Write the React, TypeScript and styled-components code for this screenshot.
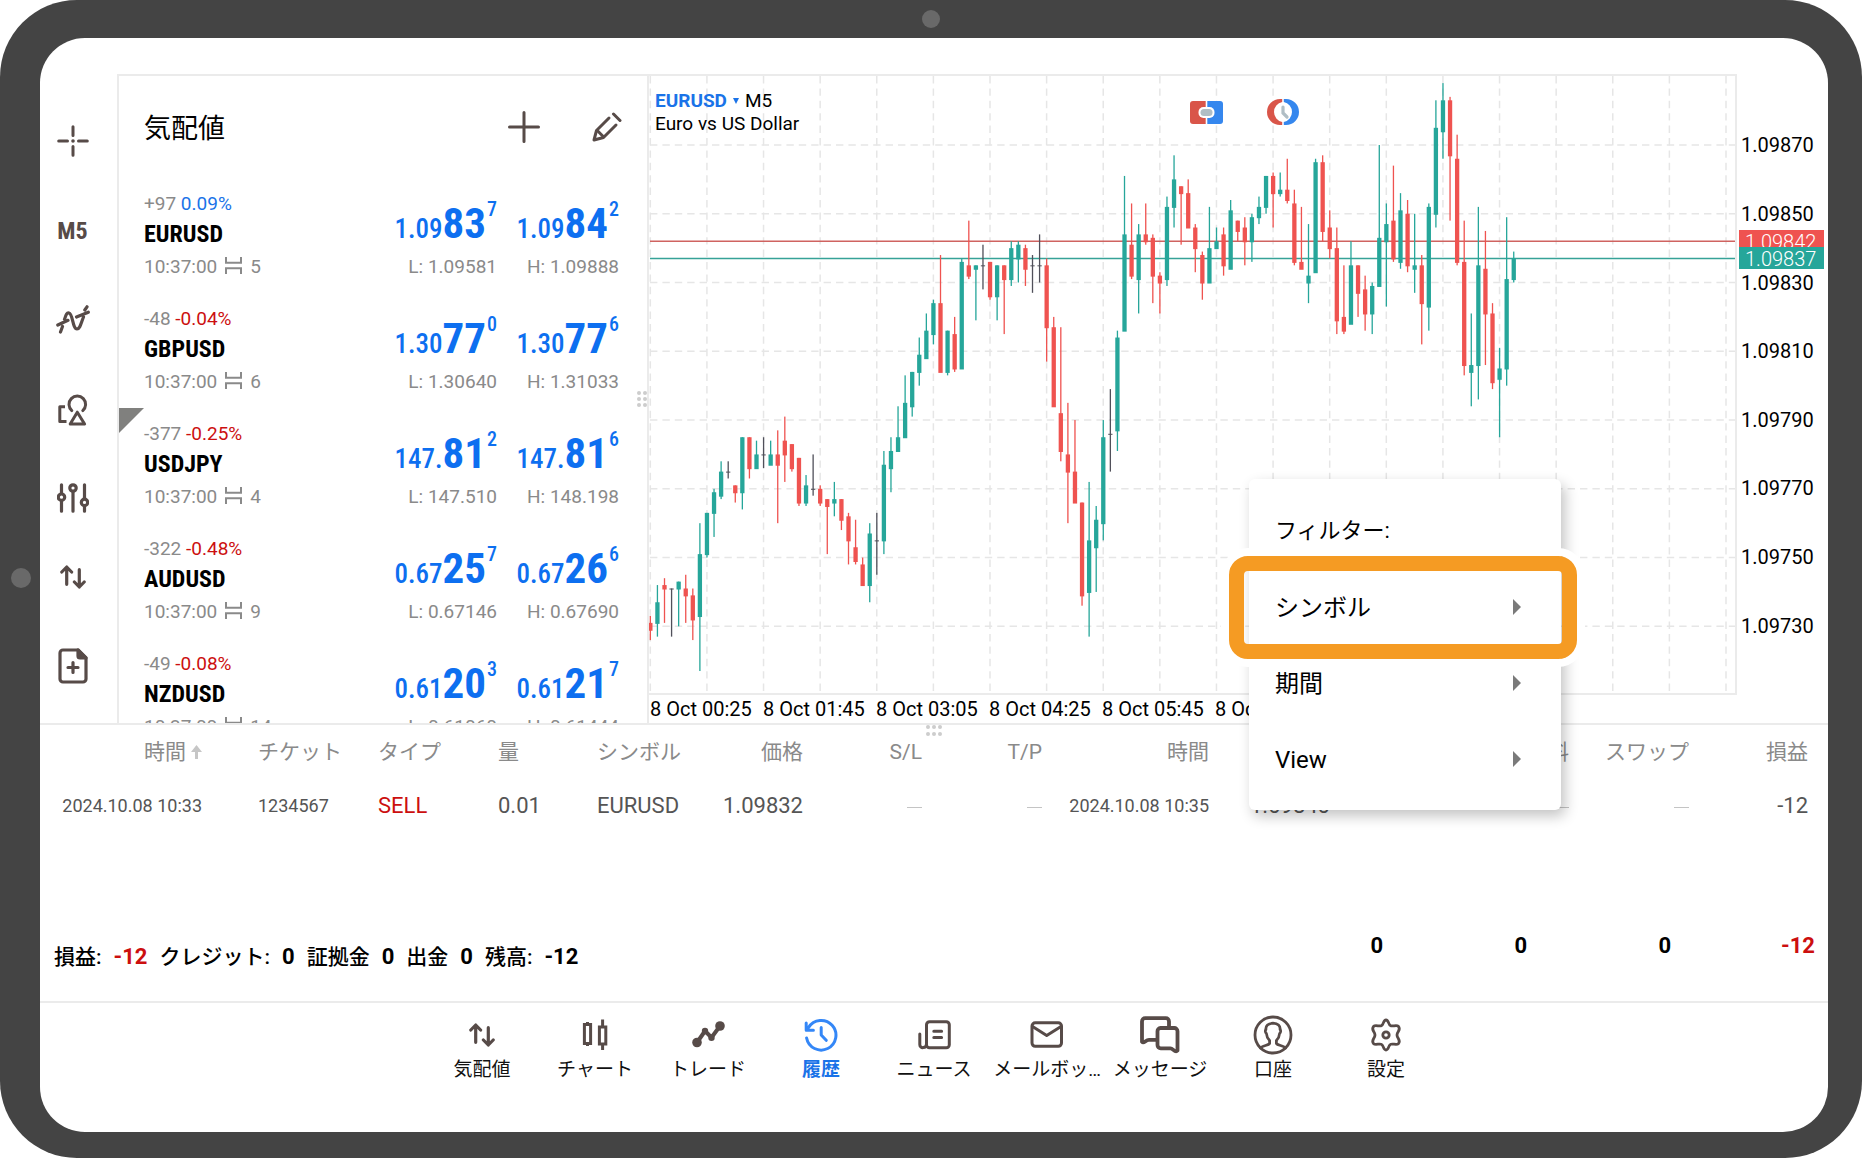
import React from "react";
import styled, { createGlobalStyle, css } from "styled-components";

const ink = "#574b48";
const blue = "#0d6ff0";
const red = "#cc0f0f";
const line = "#ebebeb";
const sans = `Roboto, "Noto Sans CJK JP", sans-serif`;
const narrow = `"Roboto Condensed", "Liberation Sans Narrow", Roboto, "Noto Sans CJK JP", sans-serif`;

const GlobalStyle = createGlobalStyle`
  *, *::before, *::after { box-sizing: border-box; }
  body { margin: 0; background: #fff; color: #000; font-family: ${sans}; }
  button { margin: 0; padding: 0; border: 0; background: none; color: inherit; font: inherit; cursor: pointer; }
`;

/* ---------- device ---------- */

const Device = styled.div`
  position: relative;
  display: flex;
  height: 100vh;
  min-height: 900px;
  padding: 38px 34px 26px 40px;
  border-radius: 77px;
  background: #444;
`;

const TopCamera = styled.span`
  position: absolute;
  top: 10px;
  left: 50%;
  width: 18px;
  height: 18px;
  margin-left: -9px;
  border-radius: 50%;
  background: #696969;
`;

const SideCamera = styled.span`
  position: absolute;
  top: 50%;
  left: 11px;
  width: 20px;
  height: 20px;
  margin-top: -11px;
  border-radius: 50%;
  background: #696969;
`;

const Screen = styled.main`
  position: relative;
  display: flex;
  flex: 1;
  flex-direction: column;
  min-width: 0;
  border-radius: 45px;
  background: #fff;
`;

const Workspace = styled.div`
  display: flex;
  flex: 1;
  min-height: 0;
  padding-top: 36px;
  border-bottom: 2px solid ${line};
`;

/* ---------- left tool bar ---------- */

const Toolbar = styled.nav`
  display: flex;
  flex: 0 0 77px;
  flex-direction: column;
  padding: 23px 12px 0 0;
`;

const ToolButton = styled.button<{ $height?: number }>`
  display: flex;
  align-items: center;
  justify-content: center;
  height: ${(p) => p.$height ?? 88}px;
  color: ${ink};
  font-family: ${narrow};
  font-size: 24px;
  font-weight: 700;
`;

/* ---------- quotes ---------- */

const Quotes = styled.section`
  position: relative;
  display: flex;
  flex: 0 0 530px;
  flex-direction: column;
  overflow: hidden;
  border-top: 2px solid ${line};
  border-left: 2px solid ${line};
`;

const QuotesHeader = styled.header`
  display: flex;
  flex: none;
  align-items: center;
  height: 102px;
  padding: 0 25px;
`;

const QuotesTitle = styled.h1`
  flex: 1;
  margin: 0;
  padding-top: 4px;
  font-size: 27px;
  font-weight: 400;
  line-height: 32px;
`;

const IconButton = styled.button`
  display: flex;
  margin-left: 52px;
  color: ${ink};
`;

const QuoteRow = styled.article<{ $marked?: boolean }>`
  position: relative;
  display: grid;
  flex: none;
  grid-template-columns: 1fr auto 122px;
  height: 115px;
  padding: 0 28px 0 25px;
  ${(p) =>
    p.$marked &&
    css`
      &::before {
        position: absolute;
        top: 0;
        left: 0;
        border-top: 25px solid #80807e;
        border-right: 25px solid transparent;
        content: "";
      }
    `}
`;

const QuoteInfo = styled.div`
  padding-top: 15px;
`;

const QuoteNote = styled.div`
  color: #8a8a8a;
  font-size: 19px;
  line-height: 22px;
`;

const Change = styled.span<{ $up: boolean }>`
  color: ${(p) => (p.$up ? "#1a73e8" : red)};
`;

const Symbol = styled.div`
  font-family: ${narrow};
  font-size: 24px;
  font-weight: 700;
  line-height: 38px;
`;

const QuoteFoot = styled.div`
  color: #8a8a8a;
  font-size: 19px;
  line-height: 28px;
  white-space: nowrap;
  svg { margin: 0 8px -1px 8px; }
`;

const PriceCell = styled.div`
  text-align: right;
`;

const Price = styled.div`
  height: 75px;
  padding-top: 21px;
  color: ${blue};
  font-family: ${narrow};
  font-size: 27px;
  font-weight: 500;
  line-height: 48px;
  white-space: nowrap;
`;

const PriceMain = styled.b`
  font-size: 43px;
  font-weight: 700;
`;

const PriceTick = styled.span`
  margin-left: 1px;
  font-size: 20px;
  line-height: 20px;
  vertical-align: 22px;
`;

const SideGrip = styled.span`
  position: absolute;
  top: 315px;
  right: 0;
  display: grid;
  grid-template-columns: 4px 4px;
  gap: 2px;
`;

const BottomGrip = styled.span`
  position: absolute;
  top: 0;
  left: 50%;
  display: grid;
  grid-template-columns: 4px 4px 4px;
  gap: 3px 2px;
  margin-left: -8px;
`;

const Dot = styled.i`
  width: 4px;
  height: 4px;
  border-radius: 50%;
  background: #cdcdcd;
`;

/* ---------- chart ---------- */

const ChartPanel = styled.section`
  position: relative;
  display: grid;
  flex: 1;
  grid-template-columns: 1fr 91px;
  grid-template-rows: 1fr 28px;
  min-width: 0;
  border-left: 2px solid ${line};
`;

const Plot = styled.div`
  position: relative;
  min-height: 0;
  border: solid ${line};
  border-width: 2px 2px 2px 0;
`;

const PlotCanvas = styled.svg`
  position: absolute;
  inset: 0;
  width: 100%;
  height: 100%;
`;

const PlotCaption = styled.div`
  position: absolute;
  top: 13px;
  left: 6px;
  font-size: 19px;
  line-height: 23px;
`;

const SymbolButton = styled.button`
  margin-right: 6px;
  color: #1a73e8;
  font-weight: 700;
  svg { margin: 0 0 3px 6px; }
`;

const PlotActions = styled.div`
  position: absolute;
  top: 23px;
  right: 436px;
  display: flex;
  gap: 44px;
`;

const PriceAxis = styled.div`
  position: relative;
  display: flex;
  flex-direction: column;
  padding: 37px 0 35px 4px;
  font-size: 20px;
`;

const AxisPrice = styled.span`
  display: flex;
  flex: 1;
  align-items: center;
`;

const PriceTag = styled.span<{ $color: string }>`
  position: absolute;
  left: 2px;
  width: 85px;
  height: 22px;
  margin-top: -11px;
  padding-left: 6px;
  background: ${(p) => p.$color};
  color: #fff;
  font-size: 20px;
  font-weight: 300;
  line-height: 24px;
`;

const TimeAxis = styled.div`
  display: flex;
  padding-left: 1px;
  font-size: 20px;
  line-height: 28px;
  white-space: nowrap;
  span { flex: 0 0 113px; }
`;

/* ---------- history ---------- */

const History = styled.section`
  position: relative;
  display: flex;
  flex: 0 0 276px;
  flex-direction: column;
  justify-content: space-between;
`;

const Deals = styled.table`
  width: 100%;
  border-collapse: collapse;
  table-layout: fixed;
  white-space: nowrap;
`;

const HeadCell = styled.th<{ $right?: boolean }>`
  height: 53px;
  padding: 0;
  color: #8a8a8a;
  font-size: 21px;
  font-weight: 400;
  line-height: 24px;
  text-align: ${(p) => (p.$right ? "right" : "left")};
  &:nth-child(2) { padding-left: 56px; }
  &:last-child { padding-right: 20px; }
  svg { margin-left: 5px; }
`;

const Cell = styled.td<{ $right?: boolean; $small?: boolean; $tone?: string }>`
  height: 55px;
  padding: 0;
  color: ${(p) => p.$tone ?? "#555"};
  font-size: ${(p) => (p.$small ? 18 : 22)}px;
  text-align: ${(p) => (p.$right ? "right" : "left")};
  &:nth-child(2) { padding-left: 56px; }
  &:last-child { padding-right: 20px; }
`;

const Dash = styled.i`
  display: inline-block;
  width: 15px;
  height: 1px;
  background: #c4c4c4;
  vertical-align: middle;
`;

const Summary = styled.footer`
  display: flex;
  justify-content: space-between;
  padding: 0 13px 30px 14px;
  font-size: 22px;
  font-weight: 700;
  line-height: 28px;
`;

const Balance = styled.dl`
  display: flex;
  gap: 12px;
  margin: 11px 0 0;
  div { display: flex; gap: 12px; }
  dt { font-size: 21px; font-weight: 500; }
  dd { margin: 0; }
`;

const Totals = styled.div`
  display: grid;
  grid-template-columns: repeat(4, 144px);
  text-align: right;
`;

const Loss = styled.span`
  color: ${red};
`;

/* ---------- bottom tabs ---------- */

const Tabs = styled.nav`
  display: flex;
  flex: 0 0 131px;
  align-items: flex-start;
  justify-content: center;
  border-top: 2px solid ${line};
`;

const Tab = styled.button<{ $active?: boolean }>`
  display: flex;
  flex: 0 0 113px;
  flex-direction: column;
  align-items: center;
  padding-top: 9px;
  color: ${(p) => (p.$active ? "#1a73e8" : "#111")};
  font-size: 19px;
  font-weight: ${(p) => (p.$active ? 700 : 400)};
  line-height: 26px;
  white-space: nowrap;
`;

const TabIcon = styled.span<{ $active?: boolean }>`
  display: flex;
  align-items: center;
  justify-content: center;
  height: 45px;
  color: ${(p) => (p.$active ? "#3487f7" : ink)};
`;

/* ---------- context menu ---------- */

const Menu = styled.div`
  position: absolute;
  right: 267px;
  bottom: 322px;
  width: 312px;
  padding: 14px 0 13px;
  border-radius: 6px;
  background: #fff;
  box-shadow: 4px 6px 14px rgba(0, 0, 0, 0.24);
`;

const MenuTitle = styled.div`
  padding-left: 26px;
  font-size: 22px;
  line-height: 76px;
`;

const MenuItem = styled.button<{ $highlighted?: boolean }>`
  position: relative;
  display: flex;
  align-items: center;
  justify-content: space-between;
  width: 100%;
  height: 76px;
  padding: 0 40px 0 26px;
  font-size: 24px;
  line-height: 28px;
  text-align: left;
  span { padding-top: 2px; }
  ${(p) =>
    p.$highlighted &&
    css`
      z-index: 1;
      &::after {
        position: absolute;
        inset: -13px -16px -14px -20px;
        border: 15px solid #f59b23;
        border-radius: 19px;
        box-shadow: 0 0 0 8px #fff;
        content: "";
      }
    `}
`;

/* ---------- icons ---------- */

type IconProps = { w: number; h: number; sw?: number; children: React.ReactNode };

const Icon = ({ w, h, sw = 3, children }: IconProps) => (
  <svg
    width={w}
    height={h}
    viewBox={`0 0 ${w} ${h}`}
    fill="none"
    stroke="currentColor"
    strokeWidth={sw}
    strokeLinecap="round"
    strokeLinejoin="round"
    aria-hidden="true"
  >
    {children}
  </svg>
);

const CrosshairIcon = () => (
  <Icon w={32} h={32}>
    <path d="M1.7 16H10.5M21.5 16H30.3M16 1.7V10.5M16 21.5V30.3" />
    <circle cx="16" cy="16" r="1.8" fill="currentColor" stroke="none" />
  </Icon>
);

const IndicatorIcon = () => (
  <Icon w={34} h={29} sw={3.2}>
    <path d="M4.5 27L6.5 21.5M1.8 20L12 15.3M8.5 14.5C10 9.5 11 7.5 13 8C17 9 16.5 24 21 24C24 24 25 18 27.5 12M28.8 5L31 1.8M20.5 12L32.3 7.2" />
  </Icon>
);

const ShapesIcon = () => (
  <Icon w={30} h={32}>
    <path d="M13.8 16.6A8.3 8.3 0 1 1 24.8 16.6" />
    <path d="M19.3 18.2L26.6 30H12.2Z" />
    <path d="M7 12.8H1.8V27.4H8.5" strokeLinecap="butt" />
  </Icon>
);

const SlidersIcon = () => (
  <Icon w={32} h={30} sw={3.2}>
    <path d="M4.5 1.8V10.5M4.5 17.8V28.2M16 8.5V28.2M27.5 1.8V15.6M27.5 23V28.2" />
    <circle cx="4.5" cy="14.2" r="3.2" />
    <circle cx="16" cy="5" r="3.2" />
    <circle cx="27.5" cy="19.4" r="3.2" />
  </Icon>
);

const ArrowsIcon = () => (
  <Icon w={26} h={24} sw={3.2}>
    <path d="M6.7 19.3V2M1.8 7L6.7 2L11.6 7M19.3 4.7V22M14.4 17L19.3 22L24.2 17" />
  </Icon>
);

const NewOrderIcon = () => (
  <Icon w={30} h={36} sw={3.2}>
    <path d="M5 2H20L28 10V31A3 3 0 0 1 25 34H5A3 3 0 0 1 2 31V5A3 3 0 0 1 5 2Z" />
    <path d="M20 2V8A2 2 0 0 0 22 10H28Z" fill="currentColor" />
    <path d="M15 14.5V24.5M10 19.5H20" />
  </Icon>
);

const PlusIcon = () => (
  <Icon w={32} h={32}>
    <path d="M16 1.5V30.5M1.5 16H30.5" />
  </Icon>
);

const PencilIcon = () => (
  <Icon w={30} h={30} sw={3}>
    <path d="M17 6L4.5 18.5L2 28L11.5 25.5L24 13" />
    <path d="M21.5 2L28 8.5M5.5 18.8L11.2 24.5" />
  </Icon>
);

const SpreadIcon = () => (
  <Icon w={17} h={17} sw={2}>
    <path d="M1 0V5.8H16V0M1 17V11.2H16V17" strokeLinecap="butt" strokeLinejoin="miter" />
  </Icon>
);

const SortIcon = () => (
  <svg width="11" height="14" viewBox="0 0 11 14" aria-hidden="true">
    <path d="M5.5 0L11 7H7V14H4V7H0Z" fill="#c6c6c6" />
  </svg>
);

const MenuArrow = () => (
  <svg width="8" height="16" viewBox="0 0 8 16" aria-hidden="true">
    <path d="M0 0L8 8L0 16Z" fill="#7a7a7a" />
  </svg>
);

const CandlesIcon = () => (
  <Icon w={26} h={32}>
    <path d="M2.4 5.5H8.6V24.5H2.4ZM5.5 3V5.5M5.5 24.5V27M17.4 8H23.8V25H17.4ZM20.6 0.5V8M20.6 25V31" strokeLinecap="butt" strokeLinejoin="miter" />
  </Icon>
);

const TradeIcon = () => (
  <Icon w={33} h={27} sw={4}>
    <path d="M5 21.5L13 10L19.5 16.5L28 5" />
    <g fill="currentColor" stroke="none">
      <circle cx="5" cy="21.5" r="4.8" />
      <circle cx="28" cy="5" r="4.8" />
      <circle cx="13" cy="10" r="3.2" />
      <circle cx="19.5" cy="16.8" r="3.2" />
    </g>
  </Icon>
);

const HistoryIcon = () => (
  <Icon w={34} h={34}>
    <path d="M2.6 20A14.8 14.8 0 1 0 4.6 9.4M2.2 5V12.2H9.4M17.2 9.5V17L22.2 22.3" />
  </Icon>
);

const NewsIcon = () => (
  <Icon w={33} h={30}>
    <rect x="8.5" y="1.8" width="22.8" height="26" rx="3" />
    <path d="M1.8 14V24.5A3 3 0 0 0 5.2 27.6C7.5 27.6 8.5 26 8.5 24M15.8 11.3H23.6M15.8 17.6H23.6" />
  </Icon>
);

const MailIcon = () => (
  <Icon w={34} h={27}>
    <rect x="2" y="1.8" width="29.5" height="23.5" rx="3.2" />
    <path d="M2.5 5.5L16.7 14.6L31 5.5" />
  </Icon>
);

const ChatIcon = () => (
  <Icon w={40} h={38} sw={3.8}>
    <path d="M29 10.5V5.4A3.2 3.2 0 0 0 25.8 2.2H5.2A3.2 3.2 0 0 0 2 5.4V25.8C4 28 5.5 23.8 9 23.8H16.5" />
    <path d="M20.5 12H34A3.2 3.2 0 0 1 37.5 15.2V34.6C35 37.4 33 32.3 30.5 32.3H20.7A3.2 3.2 0 0 1 17.5 29.1V15.2A3.2 3.2 0 0 1 20.5 12Z" />
  </Icon>
);

const AccountIcon = () => (
  <Icon w={40} h={40} sw={2.8}>
    <circle cx="20" cy="20" r="18" />
    <path d="M7.5 33C9 30.5 15.5 30.5 16.6 28.5V25.5C14 23 13.6 21 13.4 18.5C12.3 17.5 12 15.5 12.9 14.5C12.6 10.5 15 8.5 20 8.2C25 8.5 27.4 10.5 27.1 14.5C28 15.5 27.7 17.5 26.6 18.5C26.4 21 26 23 23.4 25.5V28.5C24.5 30.5 31 30.5 32.5 33" />
  </Icon>
);

const GearIcon = () => (
  <Icon w={32} h={34} sw={2.8}>
    <path d="M16 2C18.8 2 18.3 6.6 20.4 7.6C22.4 8.8 26.6 6.5 28.4 8.3C31.4 11.8 27 13.5 27 17C27 20.5 31.4 22.2 28.4 25.7C26.6 27.5 22.4 25.2 20.4 26.4C18.3 27.4 18.8 32 16 32C13.2 32 13.7 27.4 11.6 26.4C9.6 25.2 5.4 27.5 3.6 25.7C0.6 22.2 5 20.5 5 17C5 13.5 0.6 11.8 3.6 8.3C5.4 6.5 9.6 8.8 11.6 7.6C13.7 6.6 13.2 2 16 2Z" />
    <circle cx="16" cy="17" r="3.2" />
  </Icon>
);

const OneClickIcon = () => (
  <svg width="33" height="23" viewBox="0 0 33 23" aria-hidden="true">
    <path d="M3 0H15.7V23H3A3 3 0 0 1 0 20V3A3 3 0 0 1 3 0Z" fill="#d95549" />
    <path d="M17.3 0H30A3 3 0 0 1 33 3V20A3 3 0 0 1 30 23H17.3Z" fill="#3587ee" />
    <rect x="8.5" y="6" width="16" height="11" rx="5" fill="#fff" />
    <rect x="10.5" y="8" width="12" height="7" rx="3.5" fill="#b0bec5" />
  </svg>
);

const ClockIcon = () => (
  <svg width="32" height="26" viewBox="0 0 32 26" aria-hidden="true">
    <path d="M15.2 0H13A13 13 0 0 0 13 26H15.2V23A10.2 10.2 0 0 1 15.2 3Z" fill="#d95549" />
    <path d="M16.8 0H19A13 13 0 0 1 19 26H16.8V23A10.2 10.2 0 0 0 16.8 3Z" fill="#3587ee" />
    <path d="M16 8V14L20 18" stroke="#b0bec5" strokeWidth="3.2" strokeLinecap="round" fill="none" />
  </svg>
);

/* ---------- data ---------- */

const quotes = [
  { delta: "+97", pct: "0.09%", up: true, name: "EURUSD", spread: "5", bid: ["1.09", "83", "7"], ask: ["1.09", "84", "2"], low: "1.09581", high: "1.09888" },
  { delta: "-48", pct: "-0.04%", up: false, name: "GBPUSD", spread: "6", bid: ["1.30", "77", "0"], ask: ["1.30", "77", "6"], low: "1.30640", high: "1.31033" },
  { delta: "-377", pct: "-0.25%", up: false, name: "USDJPY", spread: "4", bid: ["147.", "81", "2"], ask: ["147.", "81", "6"], low: "147.510", high: "148.198", marked: true },
  { delta: "-322", pct: "-0.48%", up: false, name: "AUDUSD", spread: "9", bid: ["0.67", "25", "7"], ask: ["0.67", "26", "6"], low: "0.67146", high: "0.67690" },
  { delta: "-49", pct: "-0.08%", up: false, name: "NZDUSD", spread: "14", bid: ["0.61", "20", "3"], ask: ["0.61", "21", "7"], low: "0.61060", high: "0.61444" },
];

/* Each candle: direction (u/d/n), high, body top, body bottom, low, in points above 1.09700. */
const candleData = `
d33,31,29,26 u42,37,31,27 d44,42,41,31 n41,41,41,27 u43,43,41,30 d45,41,39,31 d41,39,32,26 u60,51,33,17
u63,63,51,50 u70,69,63,56 u78,75,68,67 n78,75,75,73 d71,71,69,66 u85,85,69,64 d85,85,76,73 u84,80,76,76
n85,80,80,76 u84,80,77,77 d87,80,77,60 d91,84,80,72 d83,83,76,75 d79,79,66,65 u74,71,66,65 n80,70,70,68
d71,70,66,65 d67,67,65,51 u72,67,66,62 d67,67,61,58 d63,62,55,48 d61,53,49,48 d50,48,42,42 u60,57,42,37
n63,55,55,45 u81,77,55,51 u85,81,76,69 u94,85,81,81 u103,95,85,85 u104,104,94,91 u114,109,104,100 u121,116,108,108
u125,124,115,112 d138,124,104,104 u116,116,104,103 d120,115,105,104 u137,136,105,105 d148,135,132,131 u135,135,134,119 n141,135,135,128
d136,136,126,125 u135,135,126,119 d135,135,131,115 u142,140,131,129 u142,141,137,130 d141,140,134,129 n138,135,135,127 n144,135,135,130
d137,135,117,107 d120,117,94,94 d117,92,81,78 d95,80,75,60 d90,75,66,66 d66,66,39,36 u72,55,40,27 u65,61,53,40
u90,85,60,55 n99,86,86,75 u116,114,87,81 u161,144,116,116 d153,141,132,131 u147,144,131,121 d153,144,142,141 d144,143,132,124
d133,132,130,121 u155,152,131,129 u167,160,152,146 d158,158,156,141 d160,156,146,146 d147,146,140,133 d139,138,130,125 u152,140,130,130
u146,142,140,140 d146,144,135,132 u154,151,134,134 d148,148,145,142 d149,146,142,135 u150,149,142,136 u155,152,149,147 u161,161,152,150
d162,161,156,146 u162,157,156,155 d166,157,154,153 d157,153,136,135 d152,136,134,134 u147,132,130,124 u166,165,133,133 d167,165,145,142
d151,146,140,137 d146,140,119,115 d135,120,116,115 u142,135,118,118 d135,135,127,120 d132,128,121,116 u130,129,121,115 u170,143,129,129
u153,147,142,123 d164,148,137,136 u156,151,136,134 d154,150,135,133 u150,135,134,127 d138,135,124,112 u153,152,123,116 u183,175,150,146
u188,183,174,166 d184,183,167,148 d173,166,136,135 d148,136,106,103 u121,106,104,94 u152,135,106,96 d145,134,121,106 d124,121,101,99
u111,105,102,85 u149,131,105,100 u139,137,131,130`;

const candles = candleData
  .trim()
  .split(/\s+/)
  .map((item) => {
    const [high, top, bottom, low] = item.slice(1).split(",").map(Number);
    return { kind: item[0], high, top, bottom, low };
  });

const plotWidth = 1086;
const plotHeight = 617;
const candleStep = 7.077;
const toX = (i: number) => 1.3 + i * candleStep;
const toY = (points: number) => 69 + (170 - points) * 3.438;
const candleColor: Record<string, string> = { u: "#26a69a", d: "#ef5350", n: "#50505a" };

const axisPoints = [170, 150, 130, 110, 90, 70, 50, 30];
const asPrice = (points: number) => (1.097 + points / 100000).toFixed(5);

const times = ["00:25", "01:45", "03:05", "04:25", "05:45", "07:05", "08:25"];

const columns = [162, 176, 120, 99, 103, 103, 119, 120, 167, 121, 239, 120, 139];

const tabs = [
  { label: "気配値", icon: <ArrowsIcon /> },
  { label: "チャート", icon: <CandlesIcon /> },
  { label: "トレード", icon: <TradeIcon /> },
  { label: "履歴", icon: <HistoryIcon />, active: true },
  { label: "ニュース", icon: <NewsIcon /> },
  { label: "メールボッ…", icon: <MailIcon /> },
  { label: "メッセージ", icon: <ChatIcon /> },
  { label: "口座", icon: <AccountIcon /> },
  { label: "設定", icon: <GearIcon /> },
];

/* ---------- parts ---------- */

const Dots = ({ count }: { count: number }) => (
  <>
    {Array.from({ length: count }, (_, i) => (
      <Dot key={i} />
    ))}
  </>
);

const PriceColumn = ({ parts, foot }: { parts: string[]; foot: string }) => (
  <PriceCell>
    <Price>
      {parts[0]}
      <PriceMain>{parts[1]}</PriceMain>
      <PriceTick>{parts[2]}</PriceTick>
    </Price>
    <QuoteFoot>{foot}</QuoteFoot>
  </PriceCell>
);

const Candles = () => (
  <PlotCanvas viewBox={`0 0 ${plotWidth} ${plotHeight}`} preserveAspectRatio="none" role="img" aria-label="EURUSD M5">
    <g stroke="#e6e6e6" strokeWidth="1.5" strokeDasharray="7.4 5">
      {Array.from({ length: 20 }, (_, i) => (
        <line key={i} x1={toX(i * 8)} x2={toX(i * 8)} y1="0" y2={plotHeight} />
      ))}
      {axisPoints.map((p) => (
        <line key={p} x1="1" x2={plotWidth} y1={toY(p)} y2={toY(p)} />
      ))}
    </g>
    <line x1="1" x2={plotWidth} y1={toY(142)} y2={toY(142)} stroke="#cf6360" strokeWidth="1.5" />
    <line x1="1" x2={plotWidth} y1={toY(137)} y2={toY(137)} stroke="#36a297" strokeWidth="1.5" />
    {candles.map((c, i) => (
      <g key={i} fill={candleColor[c.kind]}>
        <rect x={toX(i) - 0.6} y={toY(c.high)} width="1.3" height={(c.high - c.low) * 3.438} />
        <rect x={toX(i) - 2.1} y={toY(c.top)} width="4.3" height={(c.top - c.bottom) * 3.438 + 1} />
      </g>
    ))}
  </PlotCanvas>
);

export default function App() {
  return (
    <>
      <GlobalStyle />
      <Device>
        <TopCamera />
        <SideCamera />
        <Screen>
          <Workspace>
            <Toolbar>
              <ToolButton aria-label="クロスヘア"><CrosshairIcon /></ToolButton>
              <ToolButton $height={92}>M5</ToolButton>
              <ToolButton aria-label="インディケータ" $height={84}><IndicatorIcon /></ToolButton>
              <ToolButton aria-label="オブジェクト" $height={98}><ShapesIcon /></ToolButton>
              <ToolButton aria-label="設定" $height={78}><SlidersIcon /></ToolButton>
              <ToolButton aria-label="取引" $height={80}><ArrowsIcon /></ToolButton>
              <ToolButton aria-label="新規注文" $height={98}><NewOrderIcon /></ToolButton>
            </Toolbar>

            <Quotes>
              <QuotesHeader>
                <QuotesTitle>気配値</QuotesTitle>
                <IconButton aria-label="追加"><PlusIcon /></IconButton>
                <IconButton aria-label="編集"><PencilIcon /></IconButton>
              </QuotesHeader>
              {quotes.map((q) => (
                <QuoteRow key={q.name} $marked={q.marked}>
                  <QuoteInfo>
                    <QuoteNote>
                      {q.delta} <Change $up={q.up}>{q.pct}</Change>
                    </QuoteNote>
                    <Symbol>{q.name}</Symbol>
                    <QuoteFoot>
                      10:37:00<SpreadIcon />{q.spread}
                    </QuoteFoot>
                  </QuoteInfo>
                  <PriceColumn parts={q.bid} foot={`L: ${q.low}`} />
                  <PriceColumn parts={q.ask} foot={`H: ${q.high}`} />
                </QuoteRow>
              ))}
              <SideGrip><Dots count={6} /></SideGrip>
            </Quotes>

            <ChartPanel>
              <Plot>
                <Candles />
                <PlotCaption>
                  <SymbolButton>
                    EURUSD
                    <svg width="6" height="6" viewBox="0 0 6 6" aria-hidden="true">
                      <path d="M0 0H6L3 6Z" fill="currentColor" />
                    </svg>
                  </SymbolButton>
                  M5
                  <div>Euro vs US Dollar</div>
                </PlotCaption>
                <PlotActions>
                  <button aria-label="ワンクリック取引"><OneClickIcon /></button>
                  <button aria-label="板注文"><ClockIcon /></button>
                </PlotActions>
              </Plot>
              <PriceAxis>
                {axisPoints.map((p) => (
                  <AxisPrice key={p}>{asPrice(p)}</AxisPrice>
                ))}
                <PriceTag $color="#ef5350" style={{ top: `${((toY(142) + 2) / (plotHeight + 4)) * 100}%` }}>1.09842</PriceTag>
                <PriceTag $color="#26a69a" style={{ top: `${((toY(137) + 2) / (plotHeight + 4)) * 100}%` }}>1.09837</PriceTag>
              </PriceAxis>
              <TimeAxis>
                {times.map((t) => (
                  <span key={t}>8 Oct {t}</span>
                ))}
              </TimeAxis>
            </ChartPanel>
          </Workspace>

          <History>
            <BottomGrip><Dots count={6} /></BottomGrip>
            <Deals>
              <colgroup>
                {columns.map((w, i) => (
                  <col key={i} width={w} />
                ))}
              </colgroup>
              <thead>
                <tr>
                  <HeadCell $right>時間<SortIcon /></HeadCell>
                  <HeadCell>チケット</HeadCell>
                  <HeadCell>タイプ</HeadCell>
                  <HeadCell>量</HeadCell>
                  <HeadCell>シンボル</HeadCell>
                  <HeadCell $right>価格</HeadCell>
                  <HeadCell $right>S/L</HeadCell>
                  <HeadCell $right>T/P</HeadCell>
                  <HeadCell $right>時間</HeadCell>
                  <HeadCell $right>価格</HeadCell>
                  <HeadCell $right>手数料</HeadCell>
                  <HeadCell $right>スワップ</HeadCell>
                  <HeadCell $right>損益</HeadCell>
                </tr>
              </thead>
              <tbody>
                <tr>
                  <Cell $right $small>2024.10.08 10:33</Cell>
                  <Cell $small>1234567</Cell>
                  <Cell $tone={red}>SELL</Cell>
                  <Cell>0.01</Cell>
                  <Cell>EURUSD</Cell>
                  <Cell $right>1.09832</Cell>
                  <Cell $right><Dash /></Cell>
                  <Cell $right><Dash /></Cell>
                  <Cell $right $small>2024.10.08 10:35</Cell>
                  <Cell $right>1.09840</Cell>
                  <Cell $right><Dash /></Cell>
                  <Cell $right><Dash /></Cell>
                  <Cell $right>-12</Cell>
                </tr>
              </tbody>
            </Deals>
            <Summary>
              <Balance>
                <div><dt>損益:</dt><dd><Loss>-12</Loss></dd></div>
                <div><dt>クレジット:</dt><dd>0</dd></div>
                <div><dt>証拠金</dt><dd>0</dd></div>
                <div><dt>出金</dt><dd>0</dd></div>
                <div><dt>残高:</dt><dd>-12</dd></div>
              </Balance>
              <Totals>
                <span>0</span>
                <span>0</span>
                <span>0</span>
                <Loss>-12</Loss>
              </Totals>
            </Summary>
          </History>

          <Tabs>
            {tabs.map((t) => (
              <Tab key={t.label} $active={t.active}>
                <TabIcon $active={t.active}>{t.icon}</TabIcon>
                {t.label}
              </Tab>
            ))}
          </Tabs>

          <Menu>
            <MenuTitle>フィルター:</MenuTitle>
            <MenuItem $highlighted><span>シンボル</span><MenuArrow /></MenuItem>
            <MenuItem><span>期間</span><MenuArrow /></MenuItem>
            <MenuItem><span>View</span><MenuArrow /></MenuItem>
          </Menu>
        </Screen>
      </Device>
    </>
  );
}
